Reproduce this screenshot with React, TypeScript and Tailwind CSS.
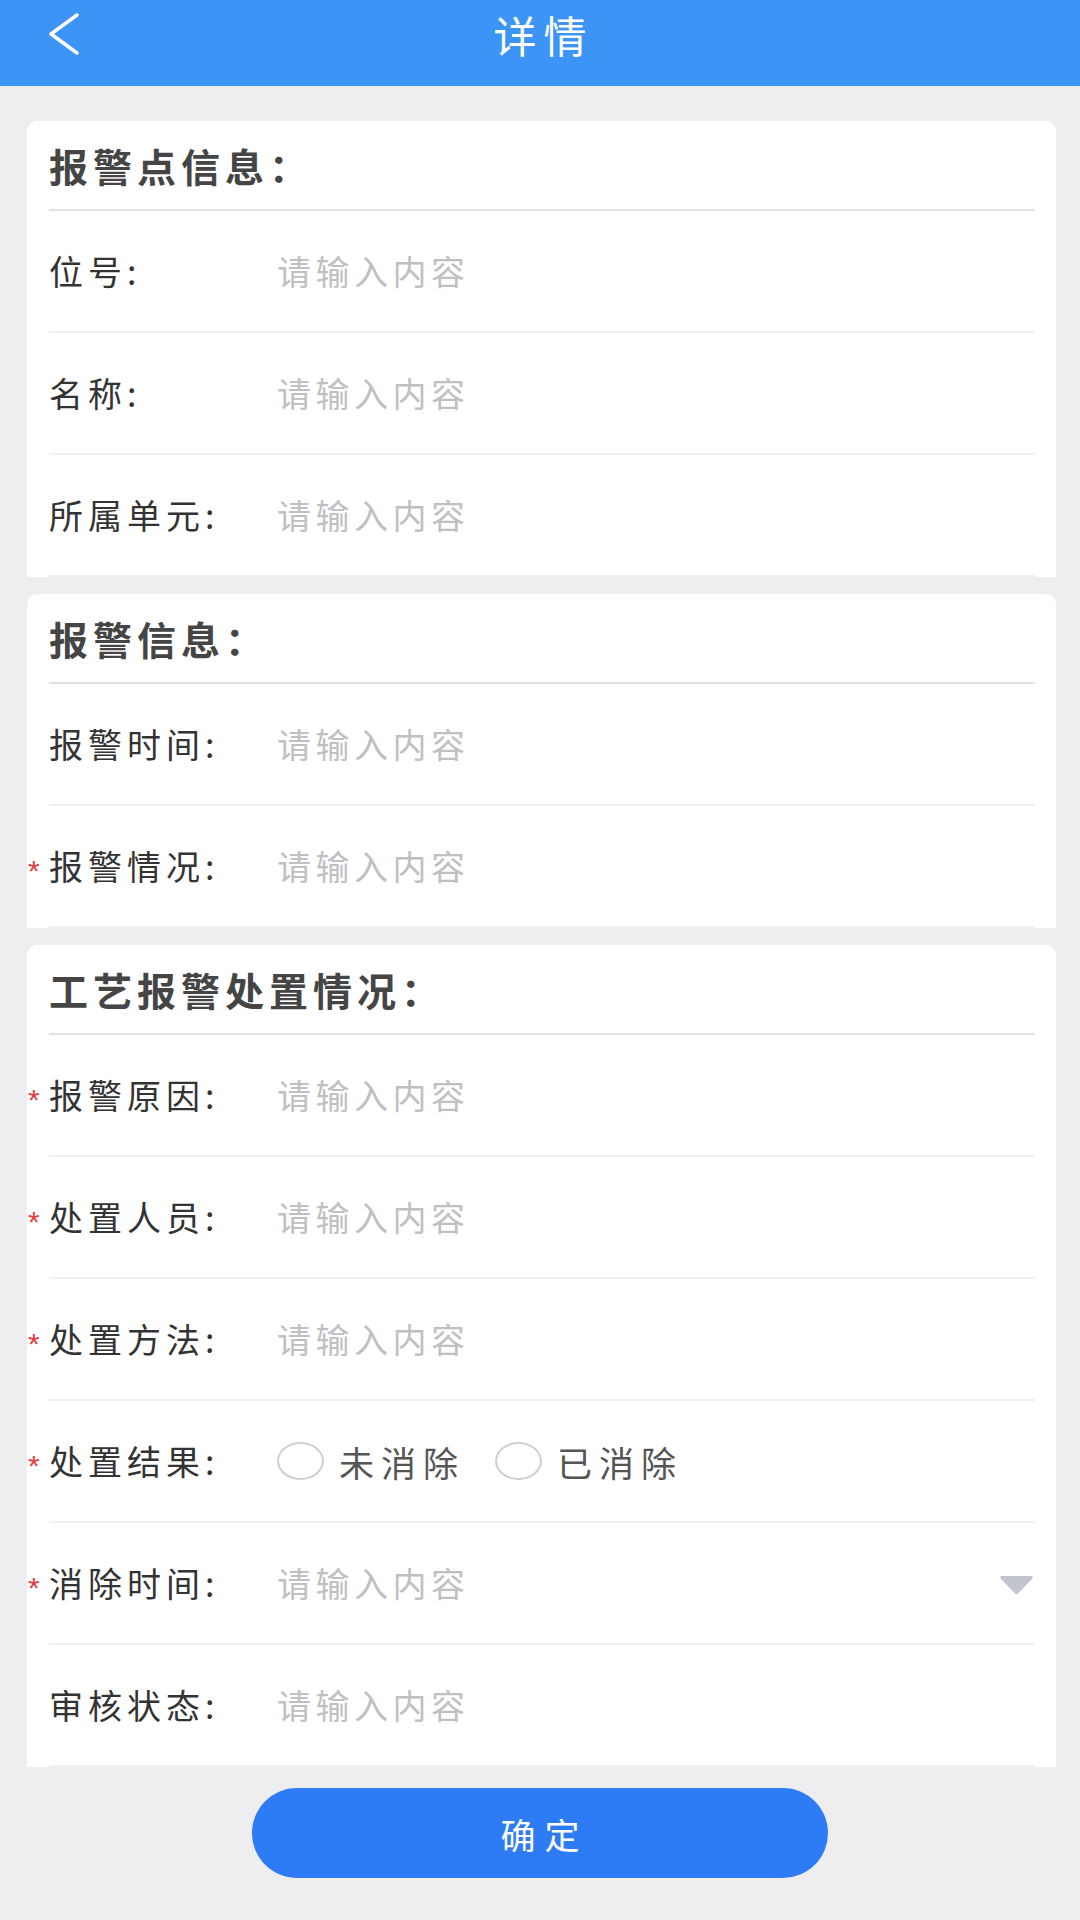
import type { ReactNode } from 'react'

const placeholder = '请输入内容'

function Card({ title, children }: { title: string; children: ReactNode }) {
  return (
    <section className="ml-[27px] mr-[24px] bg-white rounded-t-[10px] pl-[22px] pr-[21px]">
      <div className="h-[90px] flex items-center border-b-2 border-[#e2e2e4]">
        <h2 className="text-[39px] leading-none font-bold tracking-[5px] text-[#454545]">{title}</h2>
      </div>
      {children}
    </section>
  )
}

function Row({ label, required, children }: { label: string; required?: boolean; children?: ReactNode }) {
  return (
    <div className="relative h-[122px] flex items-center border-b-2 border-[#f0f0f2]">
      {required && (
        <span className="absolute -left-[21px] top-[calc(50%-10px)] text-[30px] leading-none text-[#e53e3e] font-['Liberation_Sans',sans-serif]">
          *
        </span>
      )}
      <div className="w-[228px] shrink-0 text-[34px] leading-none tracking-[5px] text-[#333333]">{label}</div>
      <div className="flex-1 flex items-center">
        {children ?? <span className="text-[34px] leading-none tracking-[4.5px] text-[#c0c0c4]">{placeholder}</span>}
      </div>
    </div>
  )
}

function Radio({ label, className }: { label: string; className?: string }) {
  return (
    <label className={`flex items-center ${className ?? ''}`}>
      <span className="w-[47px] h-[38px] rounded-[50%] border-[2.5px] border-[#cfcfd1] bg-white" />
      <span className="ml-[15px] text-[35px] leading-none tracking-[7px] text-[#555555]">{label}</span>
    </label>
  )
}

export default function App() {
  return (
    <div className="min-h-[1920px] bg-[#eeedf0] font-['Noto_Sans_CJK_SC',sans-serif]">
      {/* Header */}
      <header className="h-[86px] bg-[#3d94f7] grid grid-cols-[1fr_auto_1fr] items-center pb-[18px]">
        <div className="pl-[48px] flex items-center">
          <svg width="32" height="42" viewBox="0 0 32 42" fill="none">
            <path d="M29 2 L3 21 L29 40" stroke="white" strokeWidth="3.5" strokeLinecap="round" strokeLinejoin="round" />
          </svg>
        </div>
        <h1 className="text-[43px] leading-none text-white tracking-[7px] pl-[7px]">详情</h1>
        <div />
      </header>

      <main className="pt-[35px] flex flex-col gap-[17px]">
        <Card title="报警点信息：">
          <Row label="位号:" />
          <Row label="名称:" />
          <Row label="所属单元:" />
        </Card>

        <Card title="报警信息：">
          <Row label="报警时间:" />
          <Row label="报警情况:" required />
        </Card>

        <Card title="工艺报警处置情况：">
          <Row label="报警原因:" required />
          <Row label="处置人员:" required />
          <Row label="处置方法:" required />
          <Row label="处置结果:" required>
            <Radio label="未消除" />
            <Radio label="已消除" className="ml-[30px]" />
          </Row>
          <Row label="消除时间:" required>
            <span className="text-[34px] leading-none tracking-[4.5px] text-[#c0c0c4]">{placeholder}</span>
            <svg className="ml-auto mr-[1px] mt-[4px]" width="35" height="20" viewBox="0 0 35 20">
              <path d="M3 1 H32 Q35 1 33 4 L19.5 18 Q17.5 20 15.5 18 L2 4 Q0 1 3 1 Z" fill="#c2c5cd" />
            </svg>
          </Row>
          <Row label="审核状态:" />
        </Card>
      </main>

      <div className="pt-[21px] flex justify-center">
        <button className="w-[576px] h-[90px] rounded-full bg-[#2e7bf6] text-white text-[35px] leading-none tracking-[9px] pl-[9px]">
          确定
        </button>
      </div>
    </div>
  )
}
